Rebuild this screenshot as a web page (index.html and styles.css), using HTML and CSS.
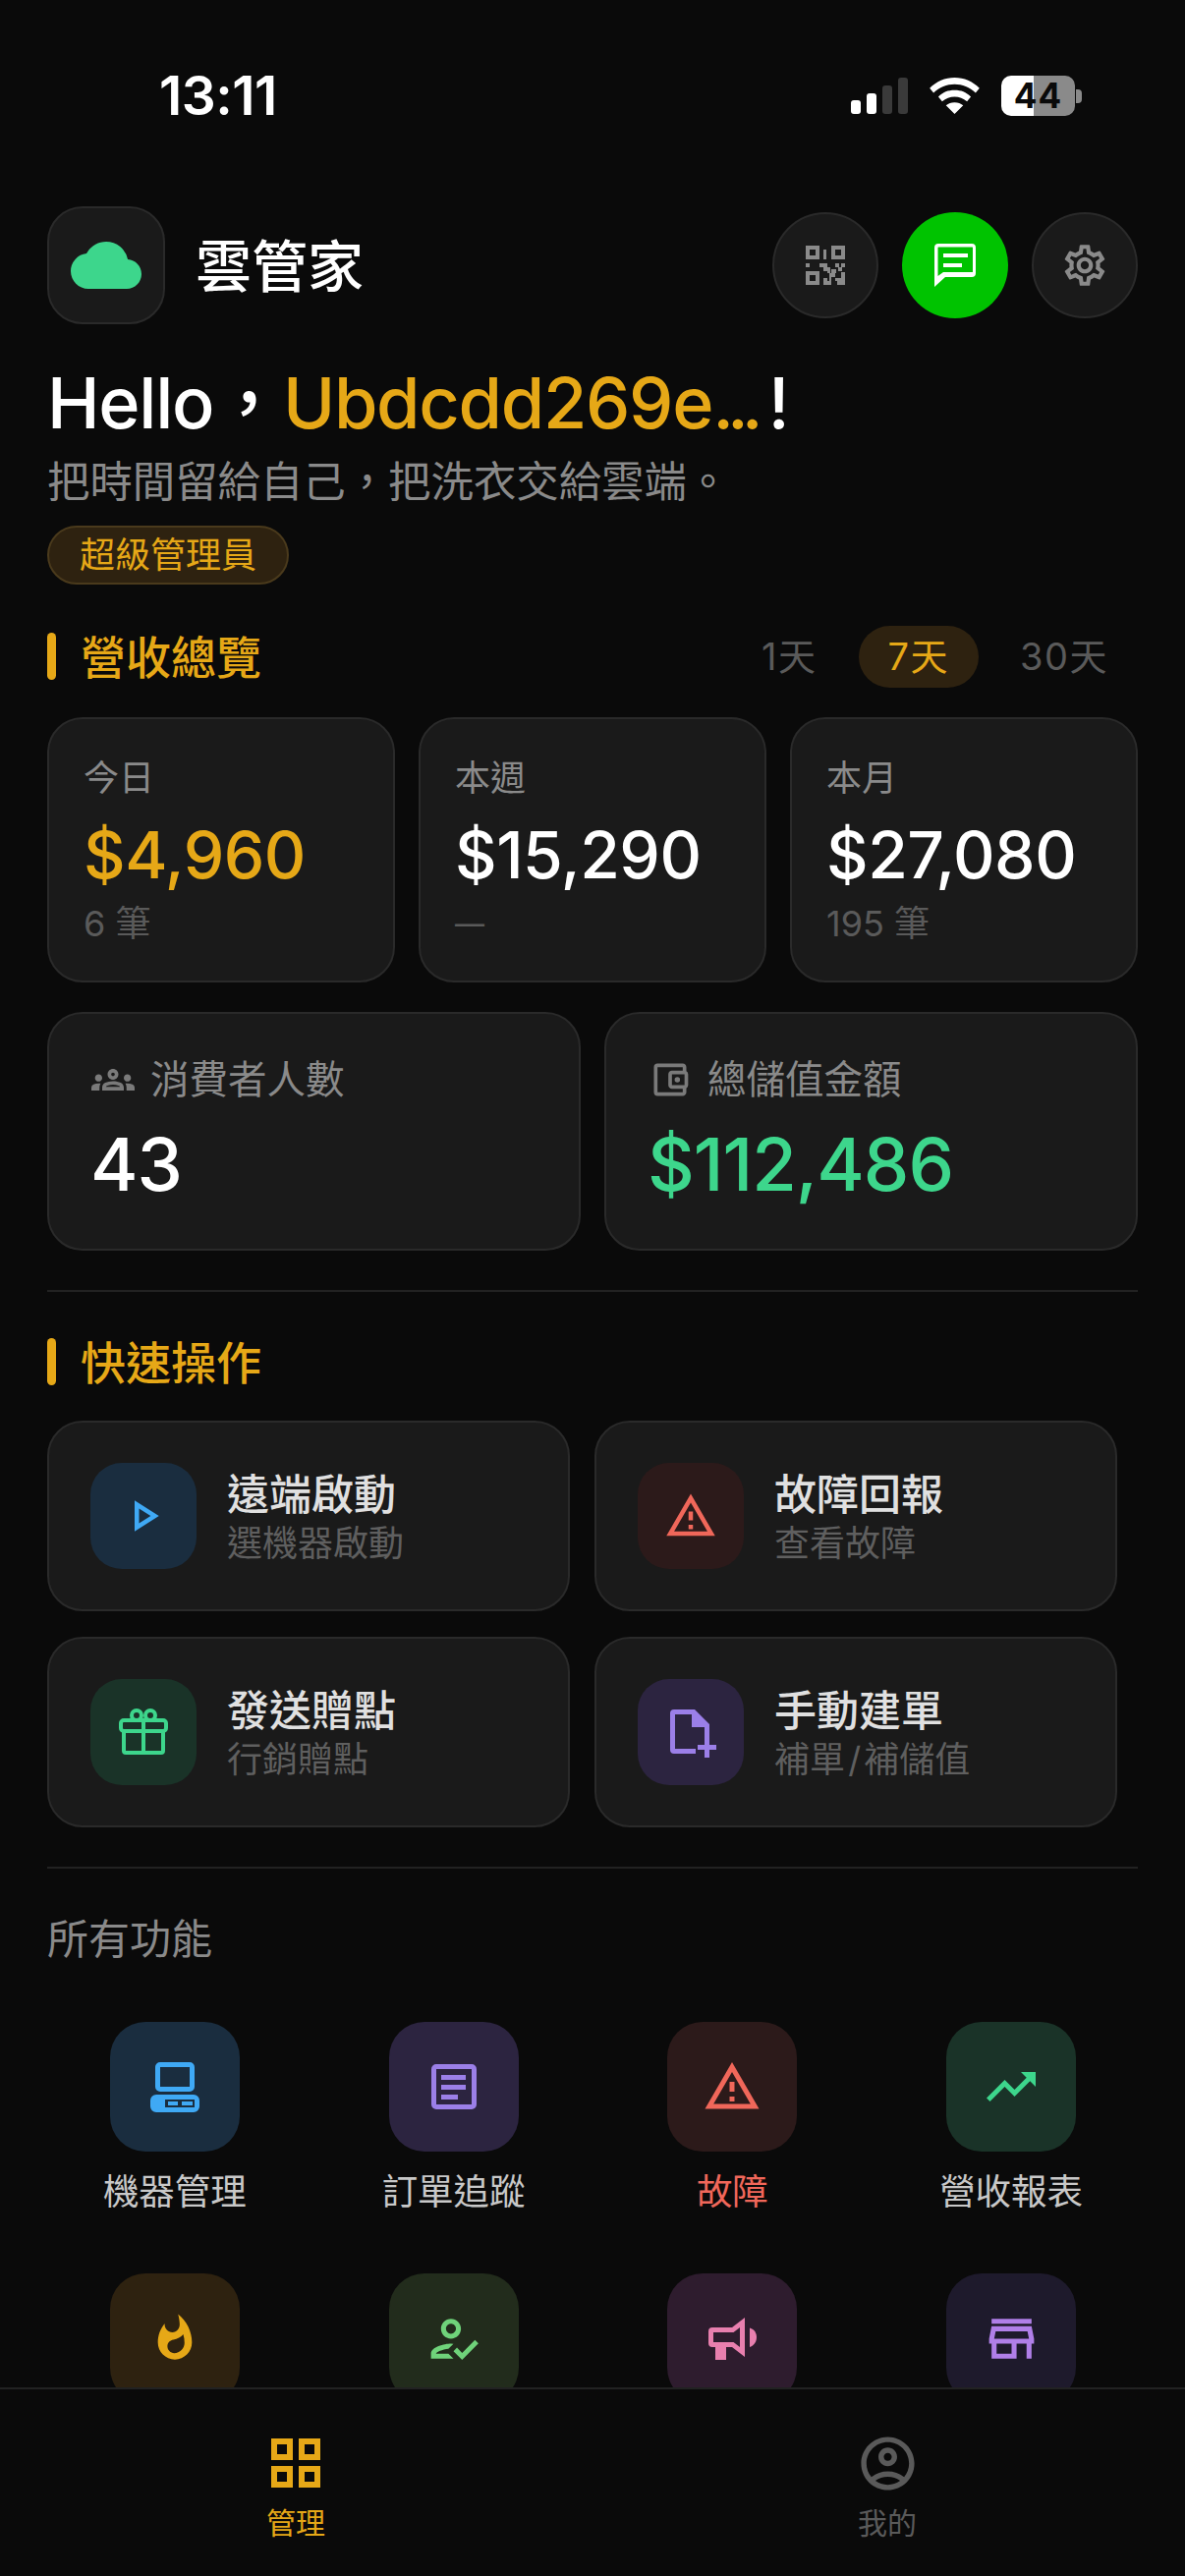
FILE: index.html

```html
<!DOCTYPE html>
<html lang="zh-Hant">
<head>
  <meta charset="UTF-8">
  <title>雲管家</title>
  <link rel="stylesheet" href="styles.css">
</head>
<body>
<div class="app">
  <div class="status-bar">
    <span class="time">13:11</span>
    <div class="status-icons">
      <div class="signal"><i class="on s1"></i><i class="on s2"></i><i class="s3"></i><i class="s4"></i></div>
      <svg class="wifi" viewBox="0 0 52 38"><path fill="#fff" d="M26 0C16 0 7 4 0 11l4 5c6-6 14-9 22-9s16 3 22 9l4-5C45 4 36 0 26 0zM26 13c-7 0-12 2-17 7l4 5c4-3 8-5 13-5s9 2 13 5l4-5c-5-5-10-7-17-7zM26 26c-4 0-6 1-9 3l9 9 9-9c-3-2-5-3-9-3z"/></svg>
      <div class="battery"><div class="battery-body"><span class="battery-num">44</span></div><div class="battery-cap"></div></div>
    </div>
  </div>

  <div class="scroll">
    <div class="header">
      <div class="logo">
        <svg viewBox="0 0 24 24" width="72" height="72"><path fill="#3dd68c" d="M19.35 10.04A7.49 7.49 0 0 0 12 4C9.11 4 6.6 5.64 5.35 8.04A5.994 5.994 0 0 0 0 14c0 3.31 2.69 6 6 6h13c2.76 0 5-2.24 5-5 0-2.64-2.05-4.78-4.65-4.96z"/></svg>
      </div>
      <div class="app-name">雲管家</div>
      <div class="header-btns">
        <div class="round-btn">
          <svg viewBox="0 0 40 40" width="40" height="40" fill="#8a8a8a"><path fill-rule="evenodd" d="M0 0h14v14H0zM4 4v6h6V4zM26 0h14v14H26zM30 4v6h6V4zM0 26h14v14H0zM4 30v6h6v-6z"/><path d="M18 4h3v10h-3zM0 18h4v4H0zM14 18h8v4h3v6h-3v-2h-4v-4h-4zM30 18h4v4h-4zM36 18h4v4h-4zM33 22h4v4h-4zM26 24h5v4h-1v4h-4v8h-8v-7h4v3h2v-8h2zM36 27h4v13h-8v-4h-2v-3h6z"/></svg>
        </div>
        <div class="round-btn line-btn">
          <svg viewBox="0 0 42 44" width="42" height="44"><path fill="#fff" d="M4 0h34a4 4 0 0 1 4 4v26a4 4 0 0 1-4 4H11L0 44V4a4 4 0 0 1 4-4zm0 3.500a.5.5 0 0 0-.5.500v29l5.500-4h29.500a.5.5 0 0 0 .5-.5V4a.5.5 0 0 0-.5-.5z"/><path fill="#fff" d="M9 10h25v4H9zM9 20h19v4H9z"/></svg>
        </div>
        <div class="round-btn">
          <svg viewBox="0 0 24 24" width="50" height="50"><path fill="#8a8a8a" d="M19.43 12.98c.04-.32.07-.64.07-.98 0-.34-.03-.66-.07-.98l2.11-1.65c.19-.15.24-.42.12-.64l-2-3.46a.5.5 0 0 0-.61-.22l-2.49 1c-.52-.4-1.08-.73-1.69-.98l-.38-2.65A.488.488 0 0 0 14 2h-4c-.25 0-.46.18-.49.42l-.38 2.65c-.61.25-1.17.59-1.69.98l-2.49-1a.566.566 0 0 0-.18-.03c-.17 0-.34.09-.43.25l-2 3.46c-.13.22-.07.49.12.64l2.11 1.65c-.04.32-.07.65-.07.98 0 .33.03.66.07.98l-2.11 1.65c-.19.15-.24.42-.12.64l2 3.46a.5.5 0 0 0 .61.22l2.49-1c.52.4 1.08.73 1.69.98l.38 2.65c.03.24.24.42.49.42h4c.25 0 .46-.18.49-.42l.38-2.65c.61-.25 1.17-.59 1.69-.98l2.49 1c.06.02.12.03.18.03.17 0 .34-.09.43-.25l2-3.46c.12-.22.07-.49-.12-.64l-2.11-1.65zm-1.98-1.71c.04.31.05.52.05.73 0 .21-.02.43-.05.73l-.14 1.13.89.7 1.08.84-.7 1.21-1.27-.51-1.04-.42-.9.68c-.43.32-.84.56-1.25.73l-1.06.43-.16 1.13-.2 1.35h-1.4l-.19-1.35-.16-1.13-1.06-.43c-.43-.18-.83-.41-1.23-.71l-.91-.7-1.06.43-1.27.51-.7-1.21 1.08-.84.89-.7-.14-1.13c-.03-.31-.05-.54-.05-.74s.02-.43.05-.73l.14-1.13-.89-.7-1.08-.84.7-1.21 1.27.51 1.04.42.9-.68c.43-.32.84-.56 1.25-.73l1.06-.43.16-1.13.2-1.35h1.39l.19 1.35.16 1.13 1.06.43c.43.18.83.41 1.23.71l.91.7 1.06-.43 1.27-.51.7 1.21-1.07.85-.89.7.14 1.13zM12 8c-2.21 0-4 1.79-4 4s1.79 4 4 4 4-1.79 4-4-1.79-4-4-4zm0 6c-1.1 0-2-.9-2-2s.9-2 2-2 2 .9 2 2-.9 2-2 2z"/></svg>
        </div>
      </div>
    </div>

    <div class="greeting">Hello<span class="comma">，</span><span class="gold">Ubdcdd269e<span class="dots">...</span></span><span class="bang">!</span></div>
    <div class="tagline">把時間留給自己，把洗衣交給雲端。</div>
    <span class="role-badge">超級管理員</span>

    <div class="section-head">
      <div class="section-title"><i class="section-bar"></i>營收總覽</div>
      <div class="range-tabs">
        <span class="range-tab">1天</span>
        <span class="range-tab active">7天</span>
        <span class="range-tab">30天</span>
      </div>
    </div>

    <div class="stat-row">
      <div class="card stat">
        <div class="stat-label">今日</div>
        <div class="stat-value gold">$4,960</div>
        <div class="stat-note">6 筆</div>
      </div>
      <div class="card stat">
        <div class="stat-label">本週</div>
        <div class="stat-value">$15,290</div>
        <div class="stat-note dash">—</div>
      </div>
      <div class="card stat">
        <div class="stat-label">本月</div>
        <div class="stat-value">$27,080</div>
        <div class="stat-note">195 筆</div>
      </div>
    </div>

    <div class="total-row">
      <div class="card total">
        <div class="total-label">
          <svg viewBox="0 0 24 24" width="44" height="44"><path fill="#7a7a7a" d="M4 13c1.1 0 2-.9 2-2s-.9-2-2-2-2 .9-2 2 .9 2 2 2zm1.13 1.1c-.37-.06-.74-.1-1.13-.1-.99 0-1.93.21-2.78.58A2.01 2.01 0 0 0 0 16.43V18h4.5v-1.61c0-.83.23-1.61.63-2.29zM20 13c1.1 0 2-.9 2-2s-.9-2-2-2-2 .9-2 2 .9 2 2 2zm4 3.43c0-.81-.48-1.53-1.22-1.85A6.95 6.95 0 0 0 20 14c-.39 0-.76.04-1.13.1.4.68.63 1.46.63 2.29V18H24v-1.57zM16.24 13.65c-1.17-.52-2.61-.9-4.24-.9-1.63 0-3.07.39-4.24.9A2.99 2.99 0 0 0 6 16.39V18h12v-1.61c0-1.18-.68-2.26-1.76-2.74zM8.07 16c.09-.23.13-.39.91-.69.97-.38 1.99-.56 3.02-.56s2.05.18 3.02.56c.77.3.81.46.91.69H8.07zM12 8c.55 0 1 .45 1 1s-.45 1-1 1-1-.45-1-1 .45-1 1-1m0-2c-1.66 0-3 1.34-3 3s1.34 3 3 3 3-1.34 3-3-1.34-3-3-3z"/></svg>
          消費者人數
        </div>
        <div class="total-value">43</div>
      </div>
      <div class="card total">
        <div class="total-label">
          <svg viewBox="0 0 24 24" width="44" height="44"><path fill="#7a7a7a" d="M21 7.28V5c0-1.1-.9-2-2-2H5a2 2 0 0 0-2 2v14a2 2 0 0 0 2 2h14c1.1 0 2-.9 2-2v-2.28A2 2 0 0 0 22 15V9a2 2 0 0 0-1-1.72zM20 9v6h-7V9h7zM5 19V5h14v2h-6c-1.1 0-2 .9-2 2v6c0 1.1.9 2 2 2h6v2H5z"/><circle fill="#7a7a7a" cx="16" cy="12" r="1.5"/></svg>
          總儲值金額
        </div>
        <div class="total-value green">$112,486</div>
      </div>
    </div>

    <div class="divider div-a"></div>

    <div class="section-title quick-title"><i class="section-bar"></i>快速操作</div>

    <div class="quick-grid">
      <div class="card quick">
        <div class="icon-box tint-blue">
          <svg viewBox="0 0 24 24" width="54" height="54"><path fill="#3fa9f5" d="M10 8.64 15.27 12 10 15.36V8.64M8 5v14l11-7L8 5z"/></svg>
        </div>
        <div class="quick-text"><div class="quick-name">遠端啟動</div><div class="quick-sub">選機器啟動</div></div>
      </div>
      <div class="card quick">
        <div class="icon-box tint-red">
          <svg viewBox="0 0 24 24" width="54" height="54"><path fill="#f0675a" d="M12 5.99 19.53 19H4.47L12 5.99M12 2 1 21h22L12 2zm1 14h-2v2h2v-2zm0-6h-2v4h2v-4z"/></svg>
        </div>
        <div class="quick-text"><div class="quick-name">故障回報</div><div class="quick-sub">查看故障</div></div>
      </div>
      <div class="card quick">
        <div class="icon-box tint-green">
          <svg viewBox="0 0 54 54" width="54" height="54" fill="none" stroke="#3dd68c" stroke-width="4" stroke-linejoin="round"><rect x="4" y="15" width="46" height="11" rx="3"/><path d="M7 26v20a2 2 0 0 0 2 2h36a2 2 0 0 0 2-2V26M27 15v33"/><circle cx="20" cy="10" r="5"/><circle cx="34" cy="10" r="5"/></svg>
        </div>
        <div class="quick-text"><div class="quick-name">發送贈點</div><div class="quick-sub">行銷贈點</div></div>
      </div>
      <div class="card quick">
        <div class="icon-box tint-purple">
          <svg viewBox="0 0 54 54" width="54" height="54"><path fill="#9b7fe8" d="M11 4h20l15 15v14h-5V22H28V9H11v35h21v5H10a4 4 0 0 1-4-4V8a4 4 0 0 1 4-4z"/><path fill="#9b7fe8" d="M41 33h5v7h7v5h-7v8h-5v-8h-7v-5h7z"/></svg>
        </div>
        <div class="quick-text"><div class="quick-name">手動建單</div><div class="quick-sub slash">補單 / 補儲值</div></div>
      </div>
    </div>

    <div class="divider div-b"></div>

    <div class="all-title">所有功能</div>

    <div class="func-grid">
      <div class="func">
        <div class="func-icon tint-blue">
          <svg viewBox="0 0 50 51" width="50" height="51"><path fill="#3fa9f5" fill-rule="evenodd" d="M10 0h30a5 5 0 0 1 5 5v20a5 5 0 0 1-5 5H10a5 5 0 0 1-5-5V5a5 5 0 0 1 5-5zm0 5v20h30V5zM6 33h38a6 6 0 0 1 6 6v6a6 6 0 0 1-6 6H6a6 6 0 0 1-6-6v-6a6 6 0 0 1 6-6z"/><path fill="#1a2d3f" d="M15 38h30v8H15z"/><path fill="#3fa9f5" d="M18 40h10v4H18zM32 40h11v4H32z"/></svg>
        </div>
        <div class="func-name">機器管理</div>
      </div>
      <div class="func">
        <div class="func-icon tint-purple">
          <svg viewBox="0 0 46 46" width="46" height="46"><path fill="#9b7fe8" fill-rule="evenodd" d="M5 0h36a5 5 0 0 1 5 5v36a5 5 0 0 1-5 5H5a5 5 0 0 1-5-5V5a5 5 0 0 1 5-5zm0 5v36h36V5z"/><path fill="#9b7fe8" d="M10 11h25v5H10zM10 21h25v5H10zM10 31h17v5H10z"/></svg>
        </div>
        <div class="func-name">訂單追蹤</div>
      </div>
      <div class="func">
        <div class="func-icon tint-red">
          <svg viewBox="0 0 24 24" width="60" height="60"><path fill="#f0675a" d="M12 5.99 19.53 19H4.47L12 5.99M12 2 1 21h22L12 2zm1 14h-2v2h2v-2zm0-6h-2v4h2v-4z"/></svg>
        </div>
        <div class="func-name red">故障</div>
      </div>
      <div class="func">
        <div class="func-icon tint-green">
          <svg viewBox="0 0 24 24" width="60" height="60"><path fill="#3dd68c" d="m16 6 2.29 2.29-4.88 4.88-4-4L2 16.59 3.41 18l6-6 4 4 6.3-6.29L22 12V6z"/></svg>
        </div>
        <div class="func-name">營收報表</div>
      </div>
      <div class="func">
        <div class="func-icon tint-amber">
          <svg viewBox="0 0 24 24" width="52" height="52"><path fill="#e6a817" d="M13.5.67s.74 2.65.74 4.8c0 2.06-1.35 3.73-3.41 3.73-2.07 0-3.63-1.67-3.63-3.73l.03-.36C5.21 7.51 4 10.62 4 14c0 4.42 3.58 8 8 8s8-3.58 8-8C20 8.61 17.41 3.8 13.5.67zM11.710 19c-1.780 0-3.220-1.400-3.220-3.140 0-1.620 1.050-2.760 2.810-3.120 1.770-.36 3.600-1.210 4.620-2.580.39 1.290.59 2.650.59 4.040 0 2.650-2.150 4.800-4.800 4.800z"/></svg>
        </div>
      </div>
      <div class="func">
        <div class="func-icon tint-lime">
          <svg viewBox="0 0 24 24" width="61" height="61"><path fill="#6fd37a" d="M11 12c2.21 0 4-1.79 4-4s-1.79-4-4-4-4 1.79-4 4 1.79 4 4 4zm0-6c1.1 0 2 .9 2 2s-.9 2-2 2-2-.9-2-2 .9-2 2-2zM5 18c.2-.63 2.57-1.68 4.96-1.94l2.04-2A9.3 9.3 0 0 0 11 14c-2.67 0-8 1.34-8 4v2h9l-2-2H5zm15.6-5.5-5.13 5.17-2.07-2.08L12 17l3.47 3.5L22 13.91z"/></svg>
        </div>
      </div>
      <div class="func">
        <div class="func-icon tint-pink">
          <svg viewBox="0 0 49 43" width="49" height="43"><path fill="#e87fae" fill-rule="evenodd" d="M4 10h20L37 0v40L24 30h-6v13H7V30H4a4 4 0 0 1-4-4V14a4 4 0 0 1 4-4zm1 5v10h20.500L32 30V10l-6.500 5z"/><path fill="#e87fae" d="M42 10.500C47 12 49 16 49 20s-2 8-7 10z"/></svg>
        </div>
      </div>
      <div class="func">
        <div class="func-icon tint-violet">
          <svg viewBox="0 0 24 24" width="61" height="61"><path fill="#b07fe8" d="M18.36 9l.6 3H5.04l.6-3h12.72M20 4H4v2h16V4zm0 3H4l-1 5v2h1v6h10v-6h4v6h2v-6h1v-2l-1-5zM6 18v-4h6v4H6z"/></svg>
        </div>
      </div>
    </div>
  </div>

  <div class="bottom-nav">
    <div class="nav-item active">
      <div class="nav-icon"><svg viewBox="0 0 50 50" width="50" height="50"><path fill="#e6a817" fill-rule="evenodd" d="M0 0h22v22H0zm6 6v10h10V6zM28 0h22v22H28zm6 6v10h10V6zM0 28h22v22H0zm6 6v10h10V34zM28 28h22v22H28zm6 6v10h10V34z"/></svg></div>
      <span>管理</span>
    </div>
    <div class="nav-item">
      <div class="nav-icon"><svg viewBox="0 0 24 24" width="65" height="65"><path fill="#5a5a5a" d="M12 2C6.48 2 2 6.48 2 12s4.48 10 10 10 10-4.48 10-10S17.52 2 12 2zM7.35 18.5C8.66 17.56 10.26 17 12 17s3.34.56 4.65 1.5c-1.31.94-2.91 1.5-4.65 1.5s-3.34-.56-4.65-1.5zm10.79-1.38a9.947 9.947 0 0 0-12.28 0A7.957 7.957 0 0 1 4 12c0-4.42 3.58-8 8-8s8 3.58 8 8c0 1.95-.7 3.73-1.86 5.12zM12 6c-1.93 0-3.5 1.57-3.5 3.5S10.07 13 12 13s3.5-1.57 3.5-3.5S13.93 6 12 6zm0 5c-.83 0-1.5-.67-1.5-1.5S11.17 8 12 8s1.5.67 1.5 1.5S12.83 11 12 11z"/></svg></div>
      <span>我的</span>
    </div>
  </div>
</div>
</body>
</html>
```

FILE: styles.css

```css
* { box-sizing: border-box; }
html, body { margin: 0; padding: 0; background: #0a0a0a; }
body { font-family: Inter, "Noto Sans CJK TC", sans-serif; color: #fff; }
.app { width: 1206px; height: 2622px; display: flex; flex-direction: column; overflow: hidden; }

/* status bar */
.status-bar { height: 210px; flex: none; display: flex; justify-content: space-between; align-items: flex-start; padding: 68px 105px 0 162px; }
.time { font-size: 55px; font-weight: 600; line-height: 58px; letter-spacing: -.5px; }
.status-icons { display: flex; align-items: flex-start; padding-top: 9px; }
.signal { display: flex; align-items: flex-end; gap: 6px; height: 37px; margin: 2px 22px 0 0; }
.signal i { width: 10px; border-radius: 3px; background: #3a3a3a; display: block; }
.signal .on { background: #fff; }
.s1 { height: 14px; }
.s2 { height: 21px; }
.s3 { height: 29px; }
.s4 { height: 37px; }
.wifi { width: 51px; height: 37px; margin: 2px 22px 0 0; }
.battery { display: flex; align-items: center; }
.battery-body { width: 75px; height: 41px; border-radius: 10px; background: linear-gradient(90deg, #fff 33px, #8a8a8a 33px); text-align: center; }
.battery-num { display: block; line-height: 41px; font-size: 35px; font-weight: 700; color: #0a0a0a; letter-spacing: 1px; }
.battery-cap { width: 6px; height: 14px; background: #8a8a8a; border-radius: 0 4px 4px 0; margin-left: 1px; }

.scroll { flex: 1; min-height: 0; overflow: hidden; padding: 0 48px; }

/* header */
.header { display: flex; align-items: center; height: 120px; }
.logo { width: 120px; height: 120px; border-radius: 36px; background: #1a1a1a; border: 2px solid #2a2a2a; display: flex; align-items: center; justify-content: center; }
.app-name { font-size: 57px; font-weight: 500; margin-left: 31px; flex: 1; padding-bottom: 6px; }
.header-btns { display: flex; gap: 24px; }
.round-btn { width: 108px; height: 108px; border-radius: 50%; background: #1a1a1a; border: 2px solid #2a2a2a; display: flex; align-items: center; justify-content: center; }
.line-btn { background: #00c300; border: 0; }

/* greeting */
.greeting { font-size: 72px; line-height: 88px; margin-top: 36px; font-weight: 500; white-space: nowrap; letter-spacing: -1.3px; }
.dots { letter-spacing: -7px; }
.bang { margin-left: 12px; }
.gold { color: #e6a817; }
.green { color: #3dd68c; }
.red { color: #f0675a; }
.tagline { font-size: 43.4px; line-height: 60px; color: #8a8a8a; margin-top: 6px; }
.role-badge { display: inline-block; margin-top: 15px; height: 60px; line-height: 56px; padding: 0 31px; font-size: 36px; color: #e6a817; background: #2e2210; border: 2px solid #4a3a1c; border-radius: 30px; }

/* sections */
.section-head { display: flex; justify-content: space-between; align-items: center; margin-top: 39px; height: 63px; }
.section-title { display: flex; align-items: center; font-size: 46px; font-weight: 500; color: #e6a817; }
.section-bar { width: 9px; height: 48px; border-radius: 5px; background: #e6a817; margin: 4px 25px 0 0; display: block; }
.range-tabs { display: flex; gap: 12px; margin-top: 6px; }
.range-tab { height: 63px; line-height: 63px; padding: 0 30px; font-size: 38px; color: #5a5a5a; border-radius: 32px; letter-spacing: 1.5px; }
.range-tab.active { color: #e6a817; background: #2e2210; }

.card { background: #1a1a1a; border: 2px solid #2a2a2a; border-radius: 36px; }
.stat-row { display: grid; grid-template-columns: repeat(3, 1fr); gap: 24px; margin-top: 33px; }
.stat { height: 270px; padding: 35px 35px 0; }
.stat-label { font-size: 36px; line-height: 50px; color: #8a8a8a; }
.stat-value { font-size: 66px; line-height: 80px; font-weight: 500; margin-top: 13px; white-space: nowrap; letter-spacing: -.5px; }
.stat-note { font-size: 36px; line-height: 48px; color: #5a5a5a; margin-top: 6px; }
.stat-note.dash { font-size: 30px; }
.total-row { display: grid; grid-template-columns: repeat(2, 1fr); gap: 24px; margin-top: 30px; }
.total { height: 243px; padding: 37px 42px 0; }
.total-label { display: flex; align-items: center; gap: 16px; font-size: 39.5px; line-height: 60px; color: #8a8a8a; padding-left: 1px; }
.total-value { font-size: 74px; line-height: 90px; font-weight: 500; margin-top: 11px; letter-spacing: -1px; }

.divider { height: 2px; background: #222; }
.div-a { margin-top: 40px; }
.div-b { margin-top: 40px; }

.quick-title { margin-top: 39px; height: 60px; }
.quick-grid { display: grid; grid-template-columns: 532px 532px; gap: 26px 25px; margin-top: 32px; }
.quick { height: 194px; display: flex; align-items: center; padding: 0 42px; gap: 31px; }
.icon-box { width: 108px; height: 108px; border-radius: 32px; display: flex; align-items: center; justify-content: center; flex: none; }
.quick-text { padding-top: 2px; }
.quick-name { font-size: 43px; line-height: 54px; font-weight: 500; color: #e0e0e0; }
.quick-sub { font-size: 36px; line-height: 46px; color: #5f5f5f; }
.quick-sub.slash { word-spacing: -7px; }
.tint-blue { background: #1a2d3f; }
.tint-red { background: #2c1a1a; }
.tint-green { background: #1a3328; }
.tint-purple { background: #2c2440; }
.tint-amber { background: #2e2210; }
.tint-lime { background: #222c1c; }
.tint-pink { background: #2e1c2e; }
.tint-violet { background: #1e1a2c; }

.all-title { font-size: 42px; line-height: 60px; color: #8a8a8a; margin-top: 42px; }
.func-grid { display: grid; grid-template-columns: repeat(4, 1fr); margin: 54px -13px 0 -12px; row-gap: 57px; }
.func { display: flex; flex-direction: column; align-items: center; }
.func-icon { width: 132px; height: 132px; border-radius: 36px; display: flex; align-items: center; justify-content: center; }
.func-name { font-size: 36.5px; line-height: 52px; color: #c8c8c8; margin-top: 15px; }
.func-name.red { color: #f0675a; }

/* bottom nav */
.bottom-nav { height: 192px; flex: none; border-top: 2px solid #222; background: #0a0a0a; display: grid; grid-template-columns: 1fr 1fr; padding: 42px 2px 0 0; }
.nav-item { display: flex; flex-direction: column; align-items: center; font-size: 30px; line-height: 42px; color: #5a5a5a; gap: 7px; }
.nav-icon { height: 66px; display: flex; align-items: center; }
.nav-item.active { color: #e6a817; }
```
